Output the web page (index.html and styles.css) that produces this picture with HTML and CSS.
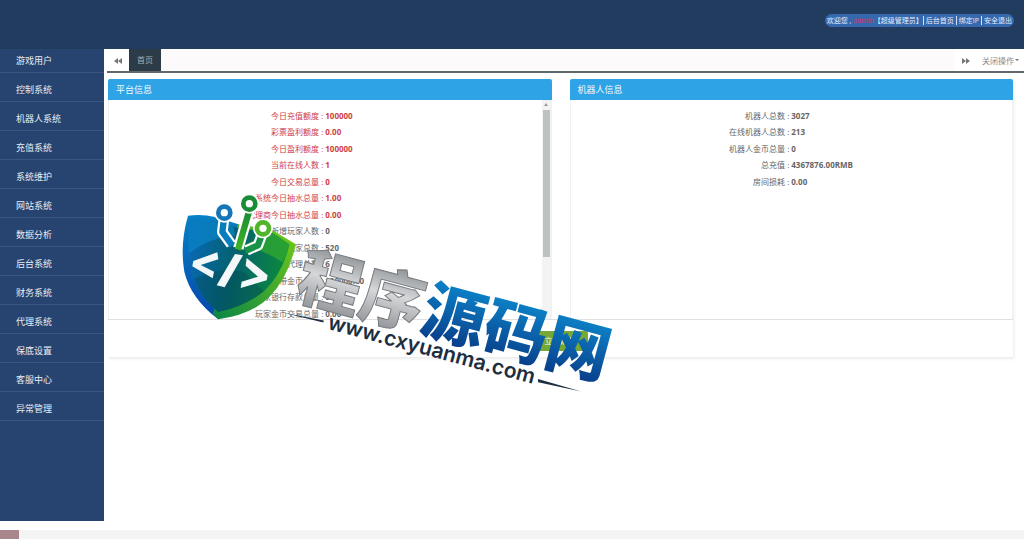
FILE: index.html
```
<!DOCTYPE html>
<html lang="zh-CN">
<head>
  <meta charset="UTF-8">
  <meta name="viewport" content="width=device-width, initial-scale=1">
  <title>后台首页</title>
  <link rel="stylesheet" href="styles.css">
</head>
<body>
  <header class="topbar">
    <div class="user-bar">
      <span>欢迎您 , <span class="user-name">admin</span>【超级管理员】</span>
      <a href="#">后台首页</a>
      <a href="#">绑定IP</a>
      <a href="#">安全退出</a>
    </div>
  </header>

  <div class="layout">
    <nav class="sidebar">
      <ul>
        <li><a href="#">游戏用户</a></li>
        <li><a href="#">控制系统</a></li>
        <li><a href="#">机器人系统</a></li>
        <li><a href="#">充值系统</a></li>
        <li><a href="#">系统维护</a></li>
        <li><a href="#">网站系统</a></li>
        <li><a href="#">数据分析</a></li>
        <li><a href="#">后台系统</a></li>
        <li><a href="#">财务系统</a></li>
        <li><a href="#">代理系统</a></li>
        <li><a href="#">保底设置</a></li>
        <li><a href="#">客服中心</a></li>
        <li><a href="#">异常管理</a></li>
      </ul>
    </nav>

    <main class="content">
      <div class="tabs">
        <button class="tab-arrow" type="button" aria-label="向左">
          <svg width="8" height="6" viewBox="0 0 8 6"><path d="M4 0v6L0 3zM8 0v6L4 3z"/></svg>
        </button>
        <a class="tab active" href="#">首页</a>
        <button class="tab-arrow tab-next" type="button" aria-label="向右">
          <svg width="8" height="6" viewBox="0 0 8 6"><path d="M0 0v6l4-3zM4 0v6l4-3z"/></svg>
        </button>
        <button class="tab-close" type="button">关闭操作
          <svg width="4" height="2" viewBox="0 0 4 2"><path d="M0 0h4L2 2z"/></svg>
        </button>
      </div>

      <div class="card">
        <div class="panels">
          <section class="panel">
            <h2>平台信息</h2>
            <div class="panel-body">
              <dl class="stats platform">
                <dt class="hot">今日充值额度 :</dt><dd class="hot">100000</dd>
                <dt class="hot">彩票盈利额度 :</dt><dd class="hot">0.00</dd>
                <dt class="hot">今日盈利额度 :</dt><dd class="hot">100000</dd>
                <dt class="hot">当前在线人数 :</dt><dd class="hot">1</dd>
                <dt class="hot">今日交易总量 :</dt><dd class="hot">0</dd>
                <dt class="hot">系统今日抽水总量 :</dt><dd class="hot">1.00</dd>
                <dt class="hot">代理商今日抽水总量 :</dt><dd class="hot">0.00</dd>
                <dt>今日新增玩家人数 :</dt><dd>0</dd>
                <dt>玩家总数 :</dt><dd>520</dd>
                <dt>代理总数 :</dt><dd>6</dd>
                <dt>玩家携带金币总量 :</dt><dd>100000.00</dd>
                <dt>玩家银行存款总量 :</dt><dd>0</dd>
                <dt>玩家金币交易总量 :</dt><dd>0.00</dd>
              </dl>
              <div class="scrollbar">
                <svg width="4" height="3" viewBox="0 0 4 3"><path d="M0 3h4L2 0z"/></svg>
                <div class="thumb"></div>
              </div>
            </div>
          </section>

          <section class="panel">
            <h2>机器人信息</h2>
            <div class="panel-body">
              <dl class="stats robot">
                <dt>机器人总数 :</dt><dd>3027</dd>
                <dt>在线机器人总数 :</dt><dd>213</dd>
                <dt>机器人金币总量 :</dt><dd>0</dd>
                <dt>总充值 :</dt><dd>4367876.00RMB</dd>
                <dt>房间损耗 :</dt><dd>0.00</dd>
              </dl>
            </div>
          </section>
        </div>
        <div class="card-footer">
          <button class="refresh" type="button">立即刷新</button>
        </div>
      </div>
    </main>
  </div>

  <footer class="footer"><span class="footer-mark"></span></footer>

  <!-- site logo, floats over the page -->
  <svg class="watermark" width="450" height="215" viewBox="0 0 450 215">
    <defs>
      <linearGradient id="blue" x1="0" y1="0" x2="0" y2="1">
        <stop offset="0.2" stop-color="#0c83c8"/><stop offset="0.9" stop-color="#093c88"/>
      </linearGradient>
      <linearGradient id="steel" x1="0" y1="0" x2="0" y2="1">
        <stop offset="0.15" stop-color="#85898d"/><stop offset="0.5" stop-color="#d5d7d9"/><stop offset="0.9" stop-color="#909397"/>
      </linearGradient>
      <linearGradient id="rimBlue" x1="0" y1="0" x2="0" y2="1">
        <stop offset="0" stop-color="#0781c5"/><stop offset="1" stop-color="#0646ad"/>
      </linearGradient>
      <linearGradient id="rimGreen" x1="0" y1="1" x2="1" y2="0">
        <stop offset="0" stop-color="#098446"/><stop offset="1" stop-color="#77cc16"/>
      </linearGradient>
      <linearGradient id="face" x1="0" y1="0.3" x2="1" y2="0.5">
        <stop offset="0" stop-color="#0869b4"/><stop offset="0.45" stop-color="#05616f"/><stop offset="1" stop-color="#0b8c39"/>
      </linearGradient>
      <linearGradient id="pinGreen" x1="0" y1="0" x2="0" y2="1">
        <stop offset="0" stop-color="#168a35"/><stop offset="1" stop-color="#42b324"/>
      </linearGradient>
    </defs>

    <g transform="scale(0.3333)">
      <path fill="url(#rimBlue)" d="M54 92Q96 86 135 96L205 118L145 403Q62 340 43 260Q29 178 54 92z"/>
      <path fill="url(#rimGreen)" d="M205 118Q260 126 312 139L378 178Q354 278 300 334Q249 388 145 403L128 388z"/>
      <path fill="url(#face)" d="M63 108Q132 103 190 125L309 145L358 178Q338 266 282 319Q224 364 145 381Q84 333 62 261Q48 190 63 108z"/>
      <path fill="#0a83c5" opacity="0.75" d="M63 108Q125 103 190 125L195 152Q120 156 56 206Q52 152 63 108z"/>
      <path fill="#35ad2d" opacity="0.7" d="M219 183Q280 150 309 145L358 178Q350 212 337 232Q284 195 219 183z"/>
      <path fill="#04454f" opacity="0.35" d="M73 282Q150 243 221 260L282 319Q224 364 145 381Q96 344 73 282z"/>

      <g fill="none" stroke-linejoin="round">
        <g stroke="#fff" stroke-width="32">
          <path d="M162 100L157 141L184 178"/>
          <path d="M238 76L205 190"/>
          <path d="M277 145L264 181L230 196"/>
        </g>
        <g stroke-width="19">
          <path stroke="#087dbb" d="M162 100L157 141L187 182"/>
          <path stroke="url(#pinGreen)" d="M238 76L204 194"/>
          <path stroke="#179246" d="M277 145L264 181L226 198"/>
        </g>
      </g>
      <g fill="#fff">
        <circle cx="163" cy="83" r="30"/>
        <circle cx="238" cy="56" r="30"/>
        <circle cx="279" cy="130" r="30"/>
      </g>
      <g fill="#fff" stroke-width="14">
        <circle cx="163" cy="83" r="18" stroke="#1476b7"/>
        <circle cx="238" cy="56" r="18" stroke="#188c36"/>
        <circle cx="279" cy="130" r="18" stroke="#50b52a"/>
      </g>

      <g fill="#f4f7f8">
        <path d="M142 202L145 223L92 240L132 260L128 280L67 244L70 228z"/>
        <path d="M195 207L219 211L164 307L140 301z"/>
        <path d="M230 219L293 271L290 286L212 309L215 290L264 275L227 242z"/>
      </g>
    </g>

    <g transform="translate(120 111) rotate(15)">
      <g class="brand">
        <text class="steel" x="4" y="0" fill="url(#steel)">程序</text>
        <text x="132" y="0" fill="url(#blue)">源码网</text>
      </g>
      <text class="brand-url" x="44" y="22">www.cxyuanma.com</text>
      <path class="rule" d="M-3 18L39 15L39 17z"/>
      <path class="rule" d="M261 16L262 19L306 17z"/>
    </g>
  </svg>
</body>
</html>
```
FILE: styles.css
```
* {
  box-sizing: border-box;
}

body {
  margin: 0;
  min-height: 100vh;
  display: flex;
  flex-direction: column;
  position: relative;
  overflow: hidden;
  background: #fff;
  color: #666;
  font-family: "Open Sans", "Noto Sans CJK SC", sans-serif;
  font-size: 8px;
}

a {
  color: inherit;
  text-decoration: none;
}

button {
  border: 0;
  padding: 0;
  background: none;
  color: inherit;
  font: inherit;
}

ul, dl, dd, h2 {
  margin: 0;
  padding: 0;
}

ul {
  list-style: none;
}

.topbar {
  display: flex;
  justify-content: flex-end;
  align-items: flex-start;
  height: 49px;
  padding: 14px 10px 0 0;
  background: #223c60;
}

.user-bar {
  display: flex;
  align-items: center;
  height: 13px;
  padding: 0 2px;
  border-radius: 7px;
  background: #3668ad;
  color: #e6eefa;
  font-size: 7px;
  line-height: 9px;
  white-space: nowrap;
}

.user-bar a {
  padding: 0 2px;
  border-left: 1px solid #d5e2f5;
}

.user-bar a:last-child {
  padding-right: 0;
}

.user-name {
  color: #d8385c;
}

.layout {
  display: flex;
  flex: 1;
}

/* left menu */
.sidebar {
  flex: 0 0 104px;
  margin-bottom: 9px;
  background: #26446f;
  color: #e8edf5;
  font-size: 9px;
}

.sidebar li {
  padding-top: 1px;
  border-bottom: 1px solid #3b5780;
}

.sidebar li + li {
  padding-top: 6px;
}

.sidebar a {
  display: block;
  padding-left: 16px;
  line-height: 22px;
}

.content {
  flex: 1;
  min-width: 0;
  padding-left: 3px;
}

/* tabs */
.tabs {
  display: flex;
  height: 24px;
  border-bottom: 2px solid #60686c;
  background: #fcfafa;
  color: #888;
}

.tab-arrow {
  width: 22px;
  background: #fff;
}

.tabs svg {
  fill: #777;
}

.tab {
  width: 32px;
  line-height: 22px;
  text-align: center;
}

.tab.active {
  background: #2b3c48;
  color: #a5afb5;
}

.tab-next {
  margin-left: auto;
}

.tab-close {
  display: flex;
  align-items: center;
  gap: 1px;
  padding: 0 5px;
  background: #fff;
}

/* info card */
.card {
  margin: 6px 11px 0 1px;
  border-bottom: 1px solid #eee;
  box-shadow: 1px 1px 3px rgba(0, 0, 0, 0.08);
}

.panels {
  display: grid;
  grid-template-columns: 1fr 1fr;
  gap: 18px;
  border-bottom: 1px solid #e0e0e0;
}

.panel h2 {
  padding-left: 8px;
  border-radius: 2px 2px 0 0;
  background: #2ea4e6;
  color: #f2faff;
  font-size: 9px;
  font-weight: normal;
  line-height: 21px;
}

.panel-body {
  display: flex;
  align-items: flex-start;
  height: 219px;
  border-left: 1px solid #f1f1f1;
  border-right: 1px solid #f1f1f1;
}

.stats {
  display: grid;
  flex: 1;
  grid-template-columns: 1fr 1fr;
  grid-auto-rows: 1fr;
  margin-top: 8px;
  line-height: 16px;
}

.stats.platform {
  height: 214px;
}

.stats.robot {
  height: 82px;
}

.stats dt {
  padding-right: 2px;
  text-align: right;
}

.stats dd {
  font-weight: bold;
}

.stats .hot {
  color: #d04046;
}

.scrollbar {
  display: flex;
  flex-direction: column;
  align-items: center;
  align-self: stretch;
  gap: 4px;
  width: 9px;
  padding-top: 3px;
  background: #f3f3f3;
}

.scrollbar svg {
  fill: #999;
}

.thumb {
  width: 7px;
  height: 147px;
  background: #bcc1c1;
}

.card-footer {
  padding: 11px 0 6px;
  text-align: center;
}

.refresh {
  width: 55px;
  border-radius: 2px;
  background: #75a835;
  color: #fff;
  line-height: 20px;
}

.footer {
  height: 9px;
  background: #f4f4f4;
}

.footer-mark {
  display: block;
  width: 19px;
  height: 9px;
  background: #a8868c;
}

/* logo overlay */
.watermark {
  position: absolute;
  left: 170px;
  top: 185px;
  overflow: visible;
  pointer-events: none;
}

.brand {
  font-family: "Noto Sans CJK SC", sans-serif;
  font-size: 64px;
  font-weight: 900;
}

.brand .steel {
  stroke: #777b7f;
  stroke-width: 1px;
}

.brand-url {
  fill: #1c2e3f;
  font-family: Inter, sans-serif;
  font-size: 21px;
  font-weight: 600;
}

.rule {
  fill: #1c2e3f;
}
```
